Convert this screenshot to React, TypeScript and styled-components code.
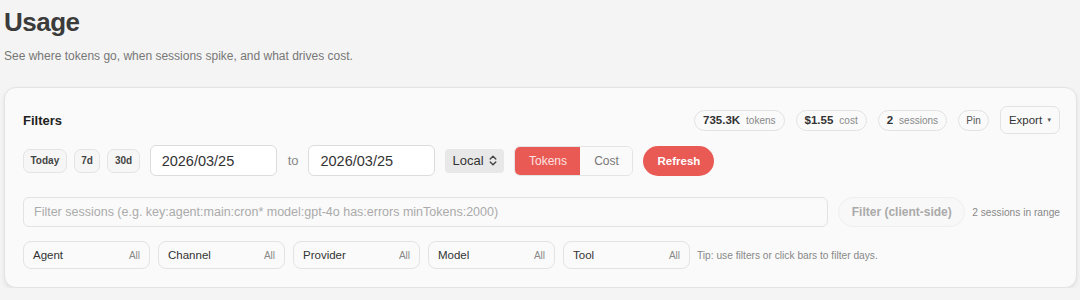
import React from "react"
import styled, { createGlobalStyle } from "styled-components"

const GlobalStyle = createGlobalStyle`
  body {
    margin: 0;
    background: #f4f4f4;
    font-family: "Liberation Sans", Arial, sans-serif;
    color: #333;
  }
`

const Page = styled.div`
  padding: 6px 3px 0 4px;
`

const Title = styled.h1`
  margin: 0;
  font-size: 26px;
  line-height: 32px;
  font-weight: 700;
  color: #3b3b3b;
  letter-spacing: -0.5px;
`

const Subtitle = styled.p`
  margin: 10px 0 0;
  font-size: 12px;
  line-height: 16px;
  color: #777;
`

const Card = styled.section`
  margin-top: 23px;
  background: #fafafa;
  border: 1px solid #e3e3e3;
  border-radius: 12px;
  box-shadow: 0 2px 4px rgba(0, 0, 0, 0.08);
  padding: 18px 16px 18px 18px;
  display: flex;
  flex-direction: column;
`

const HeaderRow = styled.div`
  display: flex;
  align-items: center;
  justify-content: space-between;
  height: 28px;
`

const CardTitle = styled.h2`
  margin: 0;
  font-size: 13px;
  font-weight: 700;
  color: #222;
`

const Summary = styled.div`
  display: flex;
  align-items: center;
  gap: 11px;
`

const Pill = styled.span`
  display: inline-flex;
  align-items: center;
  gap: 6px;
  height: 21px;
  padding: 0 8px;
  border: 1px solid #e2e2e2;
  border-radius: 11px;
  background: #fafafa;
  box-sizing: border-box;
`

const PillValue = styled.b`
  font-size: 11.5px;
  font-weight: 700;
  color: #333;
`

const PillLabel = styled.span`
  font-size: 10px;
  color: #888;
`

const PinButton = styled.button`
  height: 21px;
  width: 31px;
  padding: 0;
  border: 1px solid #e2e2e2;
  border-radius: 11px;
  background: #fafafa;
  font: inherit;
  font-size: 10px;
  color: #555;
`

const ExportButton = styled.button`
  height: 28px;
  width: 60px;
  padding: 0 0 0 1px;
  border: 1px solid #e2e2e2;
  border-radius: 7px;
  background: #fafafa;
  font: inherit;
  font-size: 11.5px;
  color: #333;
  display: inline-flex;
  align-items: center;
  justify-content: center;
  gap: 4px;
  & small {
    font-size: 6px;
    color: #555;
  }
`

const Row = styled.div<{ $top: number }>`
  display: flex;
  align-items: center;
  gap: 10px;
  margin-top: ${(p) => p.$top}px;
`

const Presets = styled.div`
  display: flex;
  gap: 7px;
`

const PresetButton = styled.button`
  height: 24px;
  padding: 0 6.5px;
  border: 1px solid #e4e4e4;
  border-radius: 7px;
  background: #f6f6f6;
  font: inherit;
  font-size: 10px;
  font-weight: 700;
  color: #444;
`

const DateBox = styled.div`
  width: 127px;
  height: 31px;
  box-sizing: border-box;
  border: 1px solid #dcdcdc;
  border-radius: 6px;
  background: #fff;
  display: flex;
  align-items: center;
  padding-left: 11px;
  font-size: 14.5px;
  color: #333;
`

const ToLabel = styled.span`
  font-size: 13px;
  color: #888;
  margin: 0 0 0 1px;
`

const TzSelect = styled.div`
  height: 24px;
  width: 59px;
  box-sizing: border-box;
  border-radius: 4px;
  background: #e8e8e8;
  display: flex;
  align-items: center;
  padding-left: 7px;
  gap: 5px;
  font-size: 13px;
  color: #333;
`

const Toggle = styled.div`
  display: flex;
  height: 30px;
  border: 1px solid #e4e4e4;
  border-radius: 6px;
  overflow: hidden;
  box-sizing: border-box;
`

const ToggleOption = styled.button<{ $active?: boolean; $w: number }>`
  width: ${(p) => p.$w}px;
  border: 0;
  padding: 0;
  font: inherit;
  font-size: 12px;
  background: ${(p) => (p.$active ? "#e95a55" : "#fafafa")};
  color: ${(p) => (p.$active ? "#fde3e1" : "#777")};
`

const RefreshButton = styled.button`
  height: 30px;
  width: 71px;
  border: 0;
  border-radius: 15px;
  background: #e95a55;
  color: #fff;
  font: inherit;
  font-size: 11.5px;
  font-weight: 700;
`

const SearchBox = styled.div`
  width: 806px;
  height: 30px;
  box-sizing: border-box;
  border: 1px solid #e2e2e2;
  border-radius: 6px;
  background: #fafafa;
  display: flex;
  align-items: center;
  padding-left: 10px;
  font-size: 12.5px;
  color: #aaa;
`

const GhostButton = styled.button`
  height: 30px;
  width: 127px;
  padding: 0;
  border: 1px solid #efefef;
  border-radius: 15px;
  background: #f8f8f8;
  font: inherit;
  font-size: 12px;
  font-weight: 700;
  color: #aaa;
`

const Hint = styled.span<{ $shift?: number }>`
  font-size: 10.2px;
  color: #888;
  white-space: nowrap;
  margin-left: ${(p) => p.$shift ?? 0}px;
`

const Facets = styled.div`
  display: flex;
  gap: 8px;
`

const Facet = styled.div`
  width: 127px;
  height: 28px;
  box-sizing: border-box;
  border: 1px solid #e3e3e3;
  border-radius: 8px;
  background: #fafafa;
  display: flex;
  align-items: center;
  justify-content: space-between;
  padding: 0 9px;
  font-size: 11.5px;
  color: #333;
  & span {
    font-size: 10px;
    color: #888;
  }
`

const Chevrons = () => (
  <svg width="8" height="11" viewBox="0 0 8 11" fill="none" stroke="#444" strokeWidth="1.4" strokeLinecap="round" strokeLinejoin="round">
    <path d="M1.2 4 4 1.2 6.8 4" />
    <path d="M1.2 7 4 9.8 6.8 7" />
  </svg>
)

const facets = ["Agent", "Channel", "Provider", "Model", "Tool"]

export default function App() {
  return (
    <Page>
      <GlobalStyle />
      <Title>Usage</Title>
      <Subtitle>See where tokens go, when sessions spike, and what drives cost.</Subtitle>
      <Card>
        <HeaderRow>
          <CardTitle>Filters</CardTitle>
          <Summary>
            <Pill>
              <PillValue>735.3K</PillValue>
              <PillLabel>tokens</PillLabel>
            </Pill>
            <Pill>
              <PillValue>$1.55</PillValue>
              <PillLabel>cost</PillLabel>
            </Pill>
            <Pill>
              <PillValue>2</PillValue>
              <PillLabel>sessions</PillLabel>
            </Pill>
            <PinButton>Pin</PinButton>
            <ExportButton>
              Export <small>▼</small>
            </ExportButton>
          </Summary>
        </HeaderRow>
        <Row $top={11}>
          <Presets>
            <PresetButton>Today</PresetButton>
            <PresetButton>7d</PresetButton>
            <PresetButton>30d</PresetButton>
          </Presets>
          <DateBox>2026/03/25</DateBox>
          <ToLabel>to</ToLabel>
          <DateBox>2026/03/25</DateBox>
          <TzSelect>
            Local <Chevrons />
          </TzSelect>
          <Toggle>
            <ToggleOption $active $w={65}>Tokens</ToggleOption>
            <ToggleOption $w={52}>Cost</ToggleOption>
          </Toggle>
          <RefreshButton>Refresh</RefreshButton>
        </Row>
        <Row $top={21}>
          <SearchBox>Filter sessions (e.g. key:agent:main:cron* model:gpt-4o has:errors minTokens:2000)</SearchBox>
          <GhostButton>Filter (client-side)</GhostButton>
          <Hint $shift={-3}>2 sessions in range</Hint>
        </Row>
        <Row $top={14}>
          <Facets>
            {facets.map((f) => (
              <Facet key={f}>
                {f}
                <span>All</span>
              </Facet>
            ))}
          </Facets>
          <Hint $shift={-3}>Tip: use filters or click bars to filter days.</Hint>
        </Row>
      </Card>
    </Page>
  )
}
